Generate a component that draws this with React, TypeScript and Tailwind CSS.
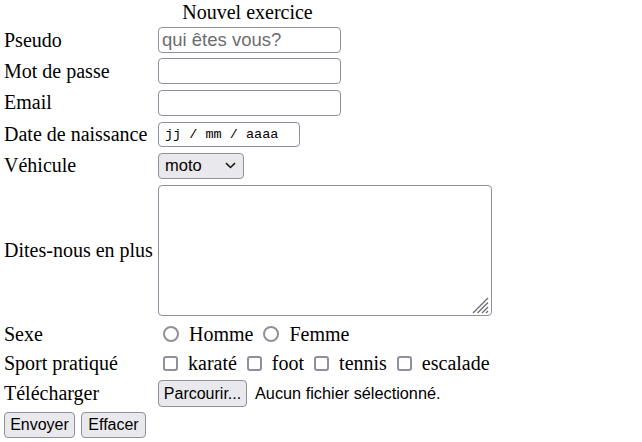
import React from 'react';

const field = "border border-[#8f8f9d] rounded-[4px] bg-white";
const btn = "border border-[#8f8f9d] rounded-[4px] bg-[#e9e9ed] font-['Liberation_Sans',Arial,sans-serif] text-[16px] text-black leading-none";

const Row: React.FC<{ label?: string; h: string; children: React.ReactNode }> = ({ label, h, children }) => (
  <div className={`grid grid-cols-[158px_1fr] items-center ${h}`}>
    <div className="pl-[4px] whitespace-nowrap">{label}</div>
    <div className="flex items-center">{children}</div>
  </div>
);

const Radio: React.FC<{ label: string }> = ({ label }) => (
  <label className="flex items-center">
    <span className="ml-[5px] w-[16px] h-[16px] rounded-full border-2 border-[#8f8f9d] bg-white" />
    <span className="ml-[10px] mr-[5px]">{label}</span>
  </label>
);

const Check: React.FC<{ label: string }> = ({ label }) => (
  <label className="flex items-center">
    <span className="ml-[5px] w-[15px] h-[15px] rounded-[3px] border-2 border-[#8f8f9d] bg-white" />
    <span className="ml-[10px] mr-[5px]">{label}</span>
  </label>
);

export default function App() {
  return (
    <div className="w-[642px] h-[442px] bg-white overflow-hidden">
      <form className="w-[495px] font-['Liberation_Serif','Times_New_Roman',serif] text-[20px] leading-[23px] text-black">
        <div className="h-[24.5px] pt-[1px] text-center">Nouvel exercice</div>

        <Row label="Pseudo" h="h-[31px]">
          <div className={`${field} w-[183px] h-[26px] px-[3px] flex items-center`}>
            <span className="font-['Liberation_Sans',Arial,sans-serif] text-[18.5px] text-[#6d6d6d] leading-none">qui êtes vous?</span>
          </div>
        </Row>
        <Row label="Mot de passe" h="h-[31.5px]">
          <div className={`${field} w-[183px] h-[26px]`} />
        </Row>
        <Row label="Email" h="h-[31.5px]">
          <div className={`${field} w-[183px] h-[26px]`} />
        </Row>
        <Row label="Date de naissance" h="h-[31.5px]">
          <div className={`${field} w-[142px] h-[25px] pl-[6px] flex items-center`}>
            <span className="font-['Liberation_Mono','Courier_New',monospace] text-[13.5px] font-medium leading-none whitespace-pre">jj / mm / aaaa</span>
          </div>
        </Row>
        <Row label="Véhicule" h="h-[31px]">
          <div className={`${btn} w-[86px] h-[26px] pl-[6px] pr-[5px] flex items-center justify-between`}>
            <span className="text-[16.5px]">moto</span>
            <svg width="11" height="7" viewBox="0 0 11 7" className="mr-[2px]">
              <path d="M1 1.2 L5.5 5.5 L10 1.2" fill="none" stroke="#1b1b1b" strokeWidth="1.6" />
            </svg>
          </div>
        </Row>
        <Row label="Dites-nous en plus" h="h-[138.5px]">
          <div className={`${field} relative w-[334px] h-[131px]`}>
            <svg width="18" height="18" viewBox="0 0 18 18" className="absolute right-[2px] bottom-[1px]">
              <path d="M17 2 L2 17 M17 6.5 L6.5 17 M17 11 L11 17 M17 15 L15 17" stroke="#6b6b75" strokeWidth="1.3" fill="none" />
            </svg>
          </div>
        </Row>
        <Row label="Sexe" h="h-[29.5px]">
          <Radio label="Homme" />
          <Radio label="Femme" />
        </Row>
        <Row label="Sport pratiqué" h="h-[28px]">
          <Check label="karaté" />
          <Check label="foot" />
          <Check label="tennis" />
          <Check label="escalade" />
        </Row>
        <Row label="Télécharger" h="h-[33px]">
          <div className={`${btn} w-[89px] h-[27px] flex items-center justify-center`}>Parcourir...</div>
          <span className="ml-[8px] font-['Liberation_Sans',Arial,sans-serif] text-[16.3px] leading-none whitespace-nowrap">Aucun fichier sélectionné.</span>
        </Row>
        <div className="h-[30px] pl-[4px] flex items-center gap-[6px]">
          <button type="button" className={`${btn} w-[71px] h-[26px]`}>Envoyer</button>
          <button type="button" className={`${btn} w-[65px] h-[26px]`}>Effacer</button>
        </div>
      </form>
    </div>
  );
}
